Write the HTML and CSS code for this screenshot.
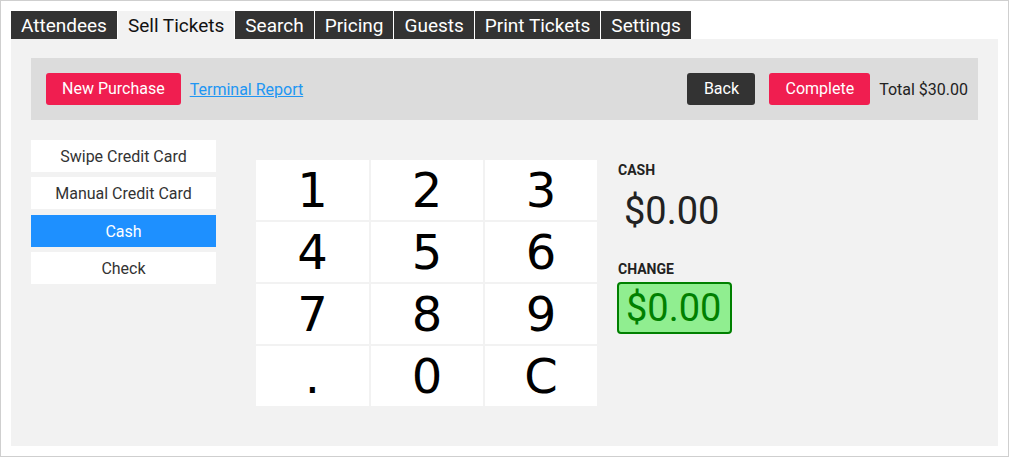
FILE: index.html
```html
<!DOCTYPE html>
<html>
<head>
<meta charset="utf-8">
<link rel="stylesheet" href="styles.css">
</head>
<body>
<div class="page">
  <nav class="tabs">
    <div class="tab">Attendees</div>
    <div class="tab active">Sell Tickets</div>
    <div class="tab">Search</div>
    <div class="tab">Pricing</div>
    <div class="tab">Guests</div>
    <div class="tab">Print Tickets</div>
    <div class="tab">Settings</div>
  </nav>
  <div class="panel">
    <div class="toolbar">
      <button class="btn btn-red">New Purchase</button>
      <a class="link" href="#">Terminal Report</a>
      <div class="spacer"></div>
      <button class="btn btn-dark">Back</button>
      <button class="btn btn-red btn-complete">Complete</button>
      <span class="total">Total $30.00</span>
    </div>
    <div class="main">
      <div class="methods">
        <div class="method">Swipe Credit Card</div>
        <div class="method">Manual Credit Card</div>
        <div class="method selected">Cash</div>
        <div class="method">Check</div>
      </div>
      <div class="keypad">
        <div class="key">1</div><div class="key">2</div><div class="key">3</div>
        <div class="key">4</div><div class="key">5</div><div class="key">6</div>
        <div class="key">7</div><div class="key">8</div><div class="key">9</div>
        <div class="key">.</div><div class="key">0</div><div class="key">C</div>
      </div>
      <div class="display">
        <div class="label">CASH</div>
        <div class="amount">$0.00</div>
        <div class="label label-change">CHANGE</div>
        <div class="amount change">$0.00</div>
      </div>
    </div>
  </div>
</div>
</body>
</html>
```
FILE: styles.css
```css
html, body {
  margin: 0;
  padding: 0;
}
body {
  font-family: Roboto, "Liberation Sans", sans-serif;
  background: #fff;
}
.page {
  box-sizing: border-box;
  width: 1009px;
  height: 457px;
  border: 1px solid #cfcfcf;
  padding: 10px;
}
.tabs {
  display: flex;
  gap: 1px;
  height: 28px;
}
.tab {
  background: #333;
  color: #fff;
  font-size: 19px;
  line-height: 29px;
  padding: 0 10px;
}
.tab.active {
  background: #f2f2f2;
  color: #111;
}
.panel {
  background: #f2f2f2;
  height: 407px;
  box-sizing: border-box;
  padding: 19px 20px 0 20px;
}
.toolbar {
  background: #dcdcdc;
  height: 62px;
  box-sizing: border-box;
  padding: 0 10px 0 15px;
  display: flex;
  align-items: center;
}
.btn {
  border: none;
  height: 32px;
  padding: 0 16px 1px;
  border-radius: 3px;
  font-family: Roboto, "Liberation Sans", sans-serif;
  font-size: 16px;
  color: #fff;
  cursor: pointer;
}
.btn-red {
  background: #f01e50;
}
.btn-dark {
  background: #333;
  min-width: 68px;
}
.btn-complete {
  margin-left: 14px;
}
.link {
  margin-left: 9px;
  color: #2196f3;
  font-size: 16px;
  text-decoration: underline;
}
.spacer {
  flex: 1;
}
.total {
  margin-left: 9px;
  font-size: 16px;
  color: #222;
}
.main {
  display: flex;
  align-items: flex-start;
  margin-top: 20px;
}
.methods {
  width: 185px;
  display: flex;
  flex-direction: column;
  gap: 5px;
}
.method {
  background: #fff;
  height: 32px;
  line-height: 33px;
  text-align: center;
  font-size: 16px;
  color: #333;
}
.method.selected {
  background: #1e90ff;
  color: #fff;
  margin-top: 1px;
}
.keypad {
  margin-left: 40px;
  margin-top: 20px;
  display: grid;
  grid-template-columns: 113px 112px 112px;
  grid-auto-rows: 60px;
  gap: 2px;
}
.key {
  background: #fff;
  font-family: "DejaVu Sans", Verdana, sans-serif;
  font-size: 48px;
  color: #000;
  text-align: center;
  line-height: 60px;
}
.display {
  margin-left: 21px;
  margin-top: 22px;
  color: #222;
}
.label {
  font-size: 14px;
  font-weight: bold;
  line-height: 16px;
  margin-bottom: 7px;
}
.label-change {
  margin-top: 24px;
  margin-bottom: 5px;
}
.amount {
  box-sizing: border-box;
  height: 52px;
  border: 2px solid transparent;
  border-radius: 4px;
  padding: 0 8px 0 4px;
  font-size: 38px;
  line-height: 48px;
  display: inline-block;
}
.amount.change {
  background: #90ee90;
  border-color: #008000;
  color: #008000;
  margin-left: -1px;
  padding: 0 9px 0 7px;
}
```
